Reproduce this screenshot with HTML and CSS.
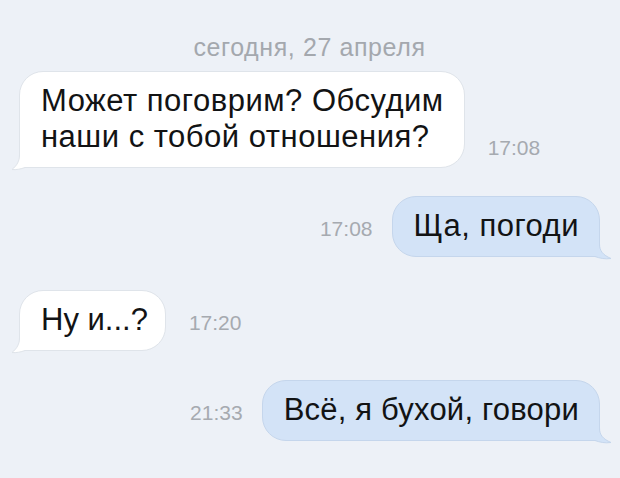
FILE: index.html
```html
<!DOCTYPE html>
<html lang="ru">
<head>
<meta charset="utf-8">
<title>Диалог</title>
<link rel="stylesheet" href="styles.css">
</head>
<body>
<div class="chat">
  <div class="date">сегодня, 27 апреля</div>

  <div class="row in r1">
    <div class="bubble">
      <svg class="tail" viewBox="0 0 26 26" width="26" height="26"><path class="tf" d="M8.5 0 L8.5 10 C8.5 16 6 20.5 1 24.5 C5 25 10 24 14 22.5 L26 22.5 L26 0 Z"/><path class="ts" d="M8.5 0 L8.5 10 C8.5 16 6 20.5 1 24.5 C5 25 10 24 14 22.5 L26 22.5"/></svg>
      <span class="txt">Может поговрим? Обсудим<br>наши с тобой отношения?</span>
    </div>
    <span class="time">17:08</span>
  </div>

  <div class="row out r2">
    <span class="time">17:08</span>
    <div class="bubble">
      <svg class="tail" viewBox="0 0 30 26" width="30" height="26"><path class="tf" d="M12.5 0 L12.5 10 C12.5 17 9 21 1 24.5 C7 25.5 13 24 17 22.5 L30 22.5 L30 0 Z"/><path class="ts" d="M12.5 0 L12.5 10 C12.5 17 9 21 1 24.5 C7 25.5 13 24 17 22.5 L30 22.5"/></svg>
      <span class="txt">Ща, погоди</span>
    </div>
  </div>

  <div class="row in r3">
    <div class="bubble">
      <svg class="tail" viewBox="0 0 26 26" width="26" height="26"><path class="tf" d="M8.5 0 L8.5 10 C8.5 16 6 20.5 1 24.5 C5 25 10 24 14 22.5 L26 22.5 L26 0 Z"/><path class="ts" d="M8.5 0 L8.5 10 C8.5 16 6 20.5 1 24.5 C5 25 10 24 14 22.5 L26 22.5"/></svg>
      <span class="txt short">Ну и...?</span>
    </div>
    <span class="time">17:20</span>
  </div>

  <div class="row out r4">
    <span class="time">21:33</span>
    <div class="bubble">
      <svg class="tail" viewBox="0 0 30 26" width="30" height="26"><path class="tf" d="M12.5 0 L12.5 10 C12.5 17 9 21 1 24.5 C7 25.5 13 24 17 22.5 L30 22.5 L30 0 Z"/><path class="ts" d="M12.5 0 L12.5 10 C12.5 17 9 21 1 24.5 C7 25.5 13 24 17 22.5 L30 22.5"/></svg>
      <span class="txt">Всё, я бухой, говори</span>
    </div>
  </div>
</div>
</body>
</html>
```

FILE: styles.css
```css
html, body {
  margin: 0;
  height: 100%;
}
body {
  background: #edf1f7;
  font-family: "Liberation Sans", Arial, sans-serif;
  overflow: hidden;
}
.chat {
  display: flex;
  flex-direction: column;
  padding: 33px 20px 0 19px;
}
.date {
  text-align: center;
  font-size: 25px;
  letter-spacing: 0.6px;
  line-height: 28px;
  color: #a4a8ae;
  margin-bottom: 10px;
}
.row {
  display: flex;
  align-items: last baseline;
  gap: 23px;
}
.row.r1 {
  align-items: flex-end;
}
.r1 .time {
  line-height: 24px;
  margin-bottom: 8px;
}
.row.out {
  justify-content: flex-end;
  gap: 19px;
}
.r2 { margin-top: 28px; }
.r3 { margin-top: 33px; }
.r4 { margin-top: 29px; }

.bubble {
  position: relative;
  font-size: 31px;
  letter-spacing: 0.5px;
  line-height: 36px;
  color: #121314;
  padding: 11px 20px 12px 21px;
  border-radius: 24px;
  white-space: nowrap;
}
.txt {
  position: relative;
}
.txt.short {
  letter-spacing: 0;
}
.r3 .bubble {
  padding-right: 17px;
}
.r4 .bubble {
  letter-spacing: 0.2px;
}
.in .bubble {
  background: #ffffff;
  border: 1px solid #dfe4ea;
  border-bottom-left-radius: 0;
}
.out .bubble {
  background: #d3e3f7;
  border: 1px solid #c5d6ec;
  border-bottom-right-radius: 0;
}
.tail {
  position: absolute;
  bottom: -4px;
  left: -9px;
  display: block;
}
.out .tail {
  left: auto;
  right: -13px;
  transform: scaleX(-1);
}
.in .tf { fill: #ffffff; }
.in .ts { fill: none; stroke: #dfe4ea; stroke-width: 1; }
.out .tf { fill: #d3e3f7; }
.out .ts { fill: none; stroke: #c5d6ec; stroke-width: 1; }

.time {
  font-size: 21px;
  color: #a6aab0;
}
```
